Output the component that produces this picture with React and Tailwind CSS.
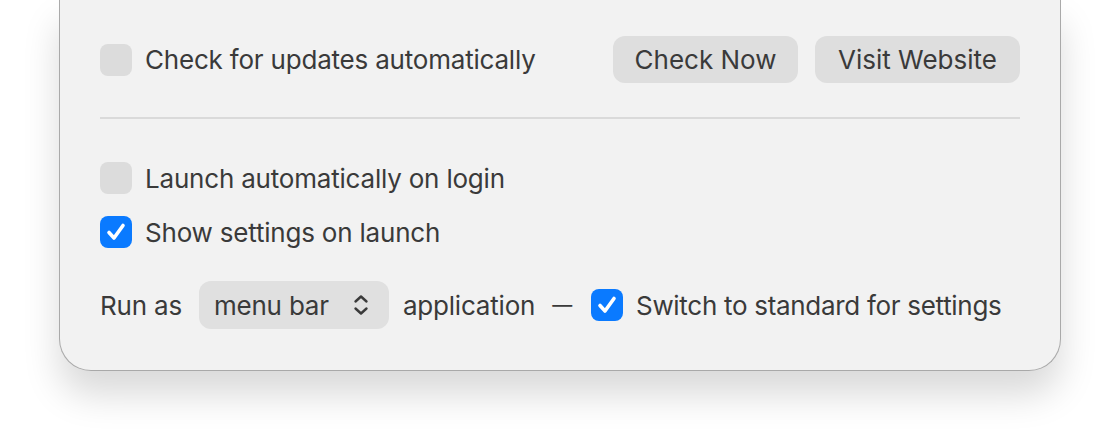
import React from "react";

function Checkbox({ checked }) {
  if (!checked) {
    return <div className="h-[32px] w-[32px] shrink-0 rounded-[8px] bg-[#dcdcdc]" />;
  }
  return (
    <div className="flex h-[32px] w-[32px] shrink-0 items-center justify-center rounded-[8px] bg-[#0a7aff]">
      <svg width="24" height="24" viewBox="0 0 24 24" fill="none">
        <path
          d="M5 12.5 L10 18 L19 5.5"
          stroke="white"
          strokeWidth="3.6"
          strokeLinecap="round"
          strokeLinejoin="round"
        />
      </svg>
    </div>
  );
}

function Button({ children, width }) {
  return (
    <button className={`flex h-[47px] items-center justify-center rounded-[12px] bg-[#dedede] text-[26px] text-[#3a3a3a] ${width}`}>
      {children}
    </button>
  );
}

export default function App() {
  return (
    <div
      className="h-[442px] w-[1120px] overflow-hidden bg-white text-[#3a3a3a]"
      style={{ fontFamily: "Inter, 'Noto Sans', sans-serif" }}
    >
      <div className="ml-[59px] flex h-[371px] w-[1002px] flex-col rounded-b-[32px] border-x border-b border-[#a9a9a9] bg-[#f2f2f2] pl-[40px] pr-[40px] pt-[36px] shadow-[0_24px_36px_rgba(0,0,0,0.15)]">
        {/* updates */}
        <div className="flex h-[47px] items-center">
          <Checkbox />
          <span className="ml-[13px] text-[26px] tracking-[-0.2px]">Check for updates automatically</span>
          <div className="ml-auto flex gap-[17px]">
            <Button width="w-[185px]">Check Now</Button>
            <Button width="w-[205px]">Visit Website</Button>
          </div>
        </div>

        <div className="mt-[34px] h-[2px] bg-[#dadada]" />

        <div className="mt-[43px] flex h-[32px] items-center">
          <Checkbox />
          <span className="ml-[13px] text-[26px] tracking-[-0.2px]">Launch automatically on login</span>
        </div>

        <div className="mt-[22px] flex h-[32px] items-center">
          <Checkbox checked />
          <span className="ml-[13px] text-[26px] tracking-[-0.2px]">Show settings on launch</span>
        </div>

        <div className="mt-[33px] flex h-[48px] items-center text-[26px] tracking-[-0.2px]">
          <span>Run as</span>
          <div className="ml-[17px] flex h-[48px] w-[190px] items-center rounded-[12px] bg-[#e0e0e0] pl-[15px] pr-[20px]">
            <span>menu bar</span>
            <svg className="ml-auto" width="16" height="22" viewBox="0 0 16 22" fill="none">
              <path d="M2.5 7.5 L8 2.5 L13.5 7.5" stroke="#3a3a3a" strokeWidth="2.4" strokeLinecap="round" strokeLinejoin="round" />
              <path d="M2.5 14.5 L8 19.5 L13.5 14.5" stroke="#3a3a3a" strokeWidth="2.4" strokeLinecap="round" strokeLinejoin="round" />
            </svg>
          </div>
          <span className="ml-[14px]">application</span>
          <span className="ml-[17px] text-[20px]">—</span>
          <div className="ml-[19px]">
            <Checkbox checked />
          </div>
          <span className="ml-[13px] tracking-[-0.3px]">Switch to standard for settings</span>
        </div>
      </div>
    </div>
  );
}
